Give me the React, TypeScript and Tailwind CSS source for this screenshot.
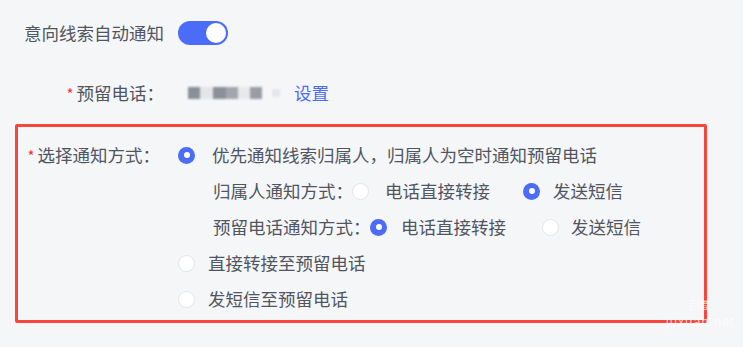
import React from 'react';

const font = { fontFamily: '"Noto Sans CJK SC", "Noto Sans", sans-serif' };

const Radio: React.FC<{ checked?: boolean }> = ({ checked }) =>
  checked ? (
    <span className="w-[17px] h-[17px] rounded-full bg-[#4a6cf7] flex items-center justify-center flex-shrink-0">
      <span className="w-[6px] h-[6px] rounded-full bg-white" />
    </span>
  ) : (
    <span className="w-[17px] h-[17px] rounded-full bg-white border border-[#e3e5ea] flex-shrink-0" />
  );

const Star = () => <span className="text-[#f5323a] text-[15px] mr-[3px] leading-none">*</span>;

const App: React.FC = () => {
  return (
    <div className="w-[752px] h-[353px] bg-white text-[17.5px] text-[#50555f]" style={font}>
      <div className="relative w-[743px] h-[347px] bg-[#f5f6f8] flex flex-col">
        {/* auto notify switch */}
        <div className="flex items-center h-[24px] mt-[21px] pl-[24px]">
          <span className="w-[154px] leading-none whitespace-nowrap">意向线索自动通知</span>
          <span className="w-[50px] h-[24px] rounded-full bg-[#4a6cf7] flex items-center justify-end pr-[2px]">
            <span className="w-[20px] h-[20px] rounded-full bg-white" />
          </span>
        </div>

        {/* reserved phone */}
        <div className="flex items-center h-[36px] mt-[30px]">
          <div className="w-[164px] flex items-center justify-end whitespace-nowrap">
            <Star />
            <span>预留电话：</span>
          </div>
          <div className="flex items-center ml-[24px] blur-[0.8px]">
            <span className="w-[12px] h-[12px] bg-[#8b8f97]" />
            <span className="w-[13px] h-[12px] bg-[#e4e5e9]" />
            <span className="w-[13px] h-[12px] bg-[#8b8f97]" />
            <span className="w-[12px] h-[12px] bg-[#a3a6ad]" />
            <span className="w-[12px] h-[12px] bg-[#e8e9ec]" />
            <span className="w-[12px] h-[12px] bg-[#9a9da4]" />
            <span className="w-[10px] h-[12px] bg-[#f5f6f8]" />
            <span className="w-[8px] h-[8px] bg-[#e4e6ea]" />
          </div>
          <span className="ml-[14px] text-[#4a6cf7]">设置</span>
        </div>

        {/* notify method box */}
        <div className="ml-[15px] mt-[13px] w-[692px] border-[3px] border-[#f8463c] rounded-[2px] pt-[10px] pb-[3px]">
          <div className="flex items-center h-[36px]">
            <div className="w-[142px] flex items-center justify-end whitespace-nowrap">
              <Star />
              <span>选择通知方式：</span>
            </div>
            <div className="ml-[18px] flex items-center whitespace-nowrap">
              <Radio checked />
              <span className="ml-[17px]">优先通知线索归属人，归属人为空时通知预留电话</span>
            </div>
          </div>

          <div className="flex items-center h-[36px] pl-[195px] whitespace-nowrap">
            <span className="w-[139px]">归属人通知方式：</span>
            <Radio />
            <span className="ml-[16px] w-[138px]">电话直接转接</span>
            <Radio checked />
            <span className="ml-[13px]">发送短信</span>
          </div>

          <div className="flex items-center h-[36px] pl-[195px] whitespace-nowrap">
            <span className="w-[157px]">预留电话通知方式：</span>
            <Radio checked />
            <span className="ml-[14px] w-[141px]">电话直接转接</span>
            <Radio />
            <span className="ml-[12px]">发送短信</span>
          </div>

          <div className="flex items-center h-[36px] pl-[160px] whitespace-nowrap">
            <Radio />
            <span className="ml-[13px]">直接转接至预留电话</span>
          </div>

          <div className="flex items-center h-[36px] pl-[160px] whitespace-nowrap">
            <Radio />
            <span className="ml-[13px]">发短信至预留电话</span>
          </div>
        </div>

        {/* watermark */}
        <div className="absolute right-[8px] bottom-[20px] flex flex-col items-center gap-[4px] text-white/70 leading-none">
          <span className="text-[10px] mr-[4px]">巨蜡</span>
          <span className="text-[13px] tracking-[0.5px]">juxuan.net</span>
        </div>
      </div>
    </div>
  );
};

export default App;
